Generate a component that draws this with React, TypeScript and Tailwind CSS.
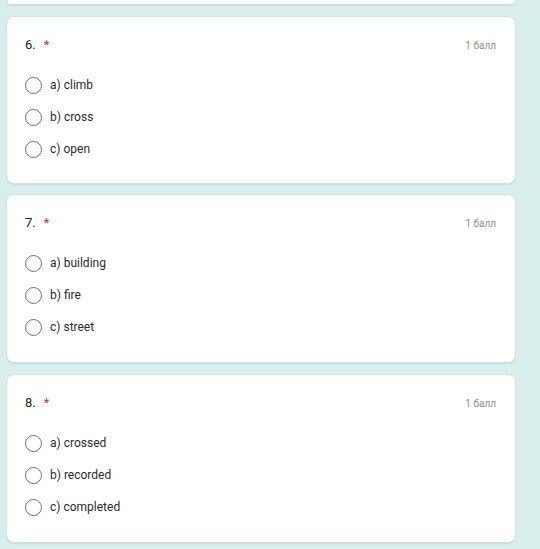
const questions = [
  { num: 6, options: ["a) climb", "b) cross", "c) open"], h: "h-[168px]", mt: "mt-[11px]" },
  { num: 7, options: ["a) building", "b) fire", "c) street"], h: "h-[169px]", mt: "mt-[10px]" },
  { num: 8, options: ["a) crossed", "b) recorded", "c) completed"], h: "h-[169px]", mt: "mt-[11px]" },
]

const Radio = () => (
  <div className="w-[17px] h-[17px] rounded-full border-[1.5px] border-[#6b6f73] shrink-0" />
)

export default function App() {
  return (
    <div
      className="w-[540px] h-[549px] bg-[#d9efed] overflow-hidden"
      style={{ fontFamily: "Roboto, 'Liberation Sans', sans-serif" }}
    >
      <div className="ml-[6px] w-[510px] h-[5px] bg-white rounded-b-lg border border-t-0 border-[#d3dedd] shadow-[0_1px_1px_rgba(0,0,0,0.08)]" />
      {questions.map((q) => (
        <div
          key={q.num}
          className={`${q.mt} ml-[6px] w-[510px] ${q.h} bg-white rounded-lg border border-[#d6e0df] shadow-[0_1px_1px_rgba(0,0,0,0.08)] pl-[18px] pr-[19px] pt-[20px]`}
        >
          <div className="flex items-center justify-between h-4">
            <div className="flex items-center text-[13px] text-[#202124]">
              <span>{q.num}.</span>
              <span className="ml-[8px] text-[#d93025]">*</span>
            </div>
            <span className="text-[10px] text-[#8a8f94]">1 балл</span>
          </div>
          <div className="mt-[16px] flex flex-col">
            {q.options.map((o) => (
              <div key={o} className="flex items-center h-8">
                <Radio />
                <span className="ml-[8px] text-[12px] text-[#2a2c2f]">{o}</span>
              </div>
            ))}
          </div>
        </div>
      ))}
    </div>
  )
}
